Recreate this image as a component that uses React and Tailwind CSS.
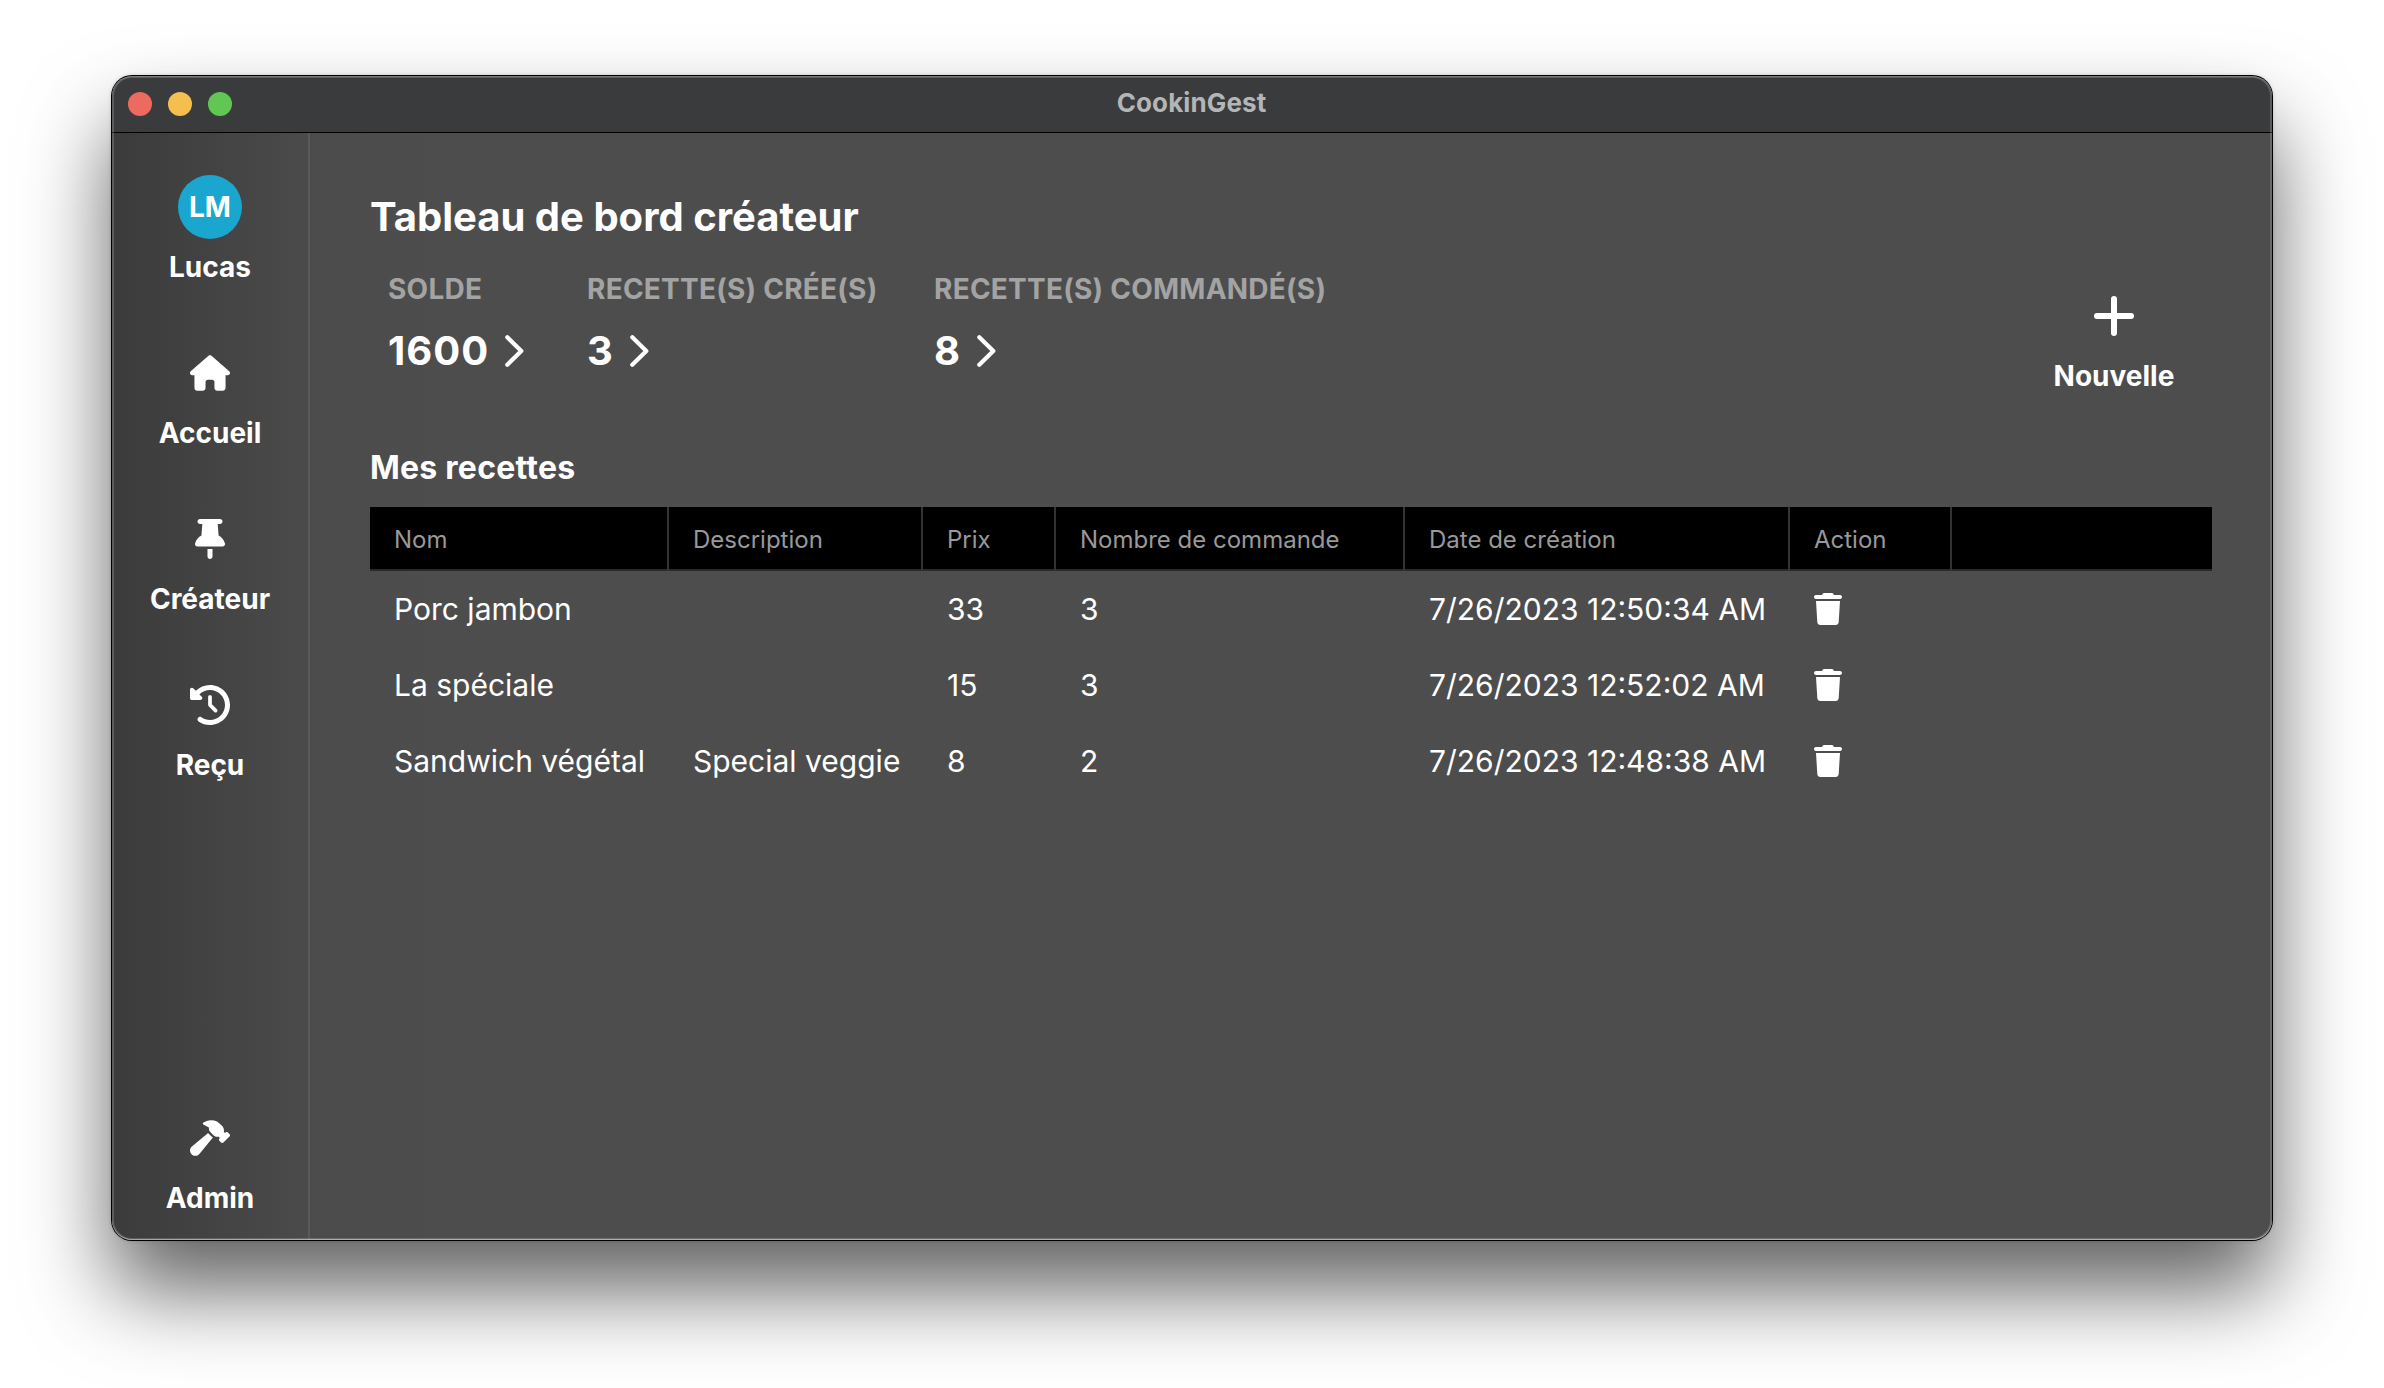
import React from 'react';
import { FaHouse, FaClockRotateLeft, FaHammer, FaTrash } from 'react-icons/fa6';

const PinIcon = () => (
  <svg viewBox="0 0 384 512" className="w-[30px] h-10" fill="currentColor">
    <path d="M32 32C32 14.3 46.3 0 64 0H320c17.7 0 32 14.3 32 32s-14.3 32-32 32H290.5l11.4 148.2c36.7 19.9 65.7 53.2 79.5 94.7l1 3c3.3 9.8 1.6 20.5-4.4 28.8s-15.7 13.3-26 13.3H32c-10.3 0-19.9-4.9-26-13.3s-7.7-19.1-4.4-28.8l1-3c13.8-41.5 42.8-74.8 79.5-94.7L93.5 64H64C46.3 64 32 49.7 32 32zM160 384h64v96c0 17.7-14.3 32-32 32s-32-14.3-32-32V384z" />
  </svg>
);

const PlusIcon = () => (
  <svg viewBox="0 0 40 40" className="size-10" fill="none" stroke="currentColor" strokeWidth="6" strokeLinecap="round">
    <path d="M20 3V37M3 20H37" />
  </svg>
);

const ChevronIcon = () => (
  <svg viewBox="0 0 19 32" className="w-[19px] h-8" fill="none" stroke="currentColor" strokeWidth="4.2" strokeLinecap="round" strokeLinejoin="round">
    <path d="M2.3 2.3L16.3 16L2.3 29.7" />
  </svg>
);

function NavItem({ label, children }) {
  return (
    <div className="flex flex-col items-center gap-2 text-[28px] leading-10 font-bold">
      <div className="flex size-16 items-center justify-center">{children}</div>
      <span>{label}</span>
    </div>
  );
}

function Stat({ label, value, className }) {
  return (
    <div className={className}>
      <div className="text-[28px] leading-[34px] font-bold tracking-[0.24px] whitespace-nowrap text-[#a3a3a3]">{label}</div>
      <div className="mt-5 flex items-center gap-4 text-[40px] leading-[49px] font-bold tracking-[1px]">
        {value}
        <ChevronIcon />
      </div>
    </div>
  );
}

const COLS = 'grid grid-cols-[299px_254px_133px_349px_385px_162px_1fr]';
const HEADERS = ['Nom', 'Description', 'Prix', 'Nombre de commande', 'Date de création', 'Action'];
const ROWS = [
  ['Porc jambon', '', '33', '3', '7/26/2023 12:50:34 AM'],
  ['La spéciale', '', '15', '3', '7/26/2023 12:52:02 AM'],
  ['Sandwich végétal', 'Special veggie', '8', '2', '7/26/2023 12:48:38 AM'],
];

export default function App() {
  return (
    <div className="h-[1388px] w-[2384px] overflow-hidden bg-white px-28 pt-[76px] font-[Inter,sans-serif] text-white">
      <div className="relative flex h-[1164px] flex-col rounded-[20px] bg-[#4d4d4d] shadow-[0_0_0_1px_#000,0_50px_86px_rgba(0,0,0,0.62),0_0_4px_rgba(0,0,0,0.25)]">
        <header className="flex h-[57px] items-start rounded-t-[20px] border-b border-black bg-[#3a3b3d]">
          <div className="flex w-[148px] gap-4 pt-4 pl-4">
            <span className="size-6 rounded-full bg-[#ed6a5f]" />
            <span className="size-6 rounded-full bg-[#f5bf4f]" />
            <span className="size-6 rounded-full bg-[#62c655]" />
          </div>
          <h1 className="flex-1 pr-[149px] text-center text-[26px] leading-[53px] font-bold tracking-[0.1px] text-[#b4b5b7]">CookinGest</h1>
        </header>

        <div className="flex flex-1 overflow-hidden rounded-b-[20px] bg-linear-to-r from-[#3b3b3b] via-[#4b4b4b] via-[200px] to-[#4d4d4d] to-[320px]">
          <aside className="flex w-[198px] flex-col gap-[54px] border-r-2 border-[#5a5a5a] pt-[42px] pb-[22px]">
            <NavItem label="Lucas">
              <span className="flex size-16 items-center justify-center rounded-full bg-[#1ba6d0]">LM</span>
            </NavItem>
            <NavItem label="Accueil"><FaHouse className="h-9 w-10" /></NavItem>
            <NavItem label="Créateur"><PinIcon /></NavItem>
            <NavItem label="Reçu"><FaClockRotateLeft className="size-10" /></NavItem>
            <div className="mt-auto">
              <NavItem label="Admin"><FaHammer className="h-9 w-10" /></NavItem>
            </div>
          </aside>

          <main className="flex-1 px-[60px] pt-[59px]">
            <div className="flex justify-between">
              <section>
                <h2 className="text-[40px] leading-[49px] font-bold">Tableau de bord créateur</h2>
                <div className="mt-[31px] flex pl-[18px]">
                  <Stat className="w-[199px]" label="SOLDE" value="1600" />
                  <Stat className="w-[347px]" label="RECETTE(S) CRÉE(S)" value="3" />
                  <Stat label="RECETTE(S) COMMANDÉ(S)" value="8" />
                </div>
              </section>
              <div className="mt-[92px] w-[196px]">
                <NavItem label="Nouvelle"><PlusIcon /></NavItem>
              </div>
            </div>

            <h3 className="mt-[52px] text-[32px] leading-[39px] font-bold tracking-[0.24px]">Mes recettes</h3>
            <div className="mt-5">
              <div className={`${COLS} h-16 border-b-2 border-[#2a2a2a] bg-black text-2xl leading-[29px] text-[#999]`}>
                {HEADERS.map((h) => (
                  <div key={h} className="-mb-0.5 border-r-2 border-[#333] pt-[18px] pl-6">{h}</div>
                ))}
              </div>
              {ROWS.map((row) => (
                <div key={row[0]} className={`${COLS} h-[76px] text-[30px] leading-[76px]`}>
                  {row.map((cell, i) => (
                    <div key={i} className="pl-6 whitespace-nowrap">{cell}</div>
                  ))}
                  <div className="flex items-center pl-6"><FaTrash className="h-8 w-7" /></div>
                </div>
              ))}
            </div>
          </main>
        </div>
        <div className="pointer-events-none absolute inset-0 rounded-[20px] shadow-[inset_0_-1px_0_rgba(255,255,255,0.45),inset_0_1px_0_rgba(255,255,255,0.2),inset_0_0_0_2px_rgba(255,255,255,0.17)]" />
      </div>
    </div>
  );
}
